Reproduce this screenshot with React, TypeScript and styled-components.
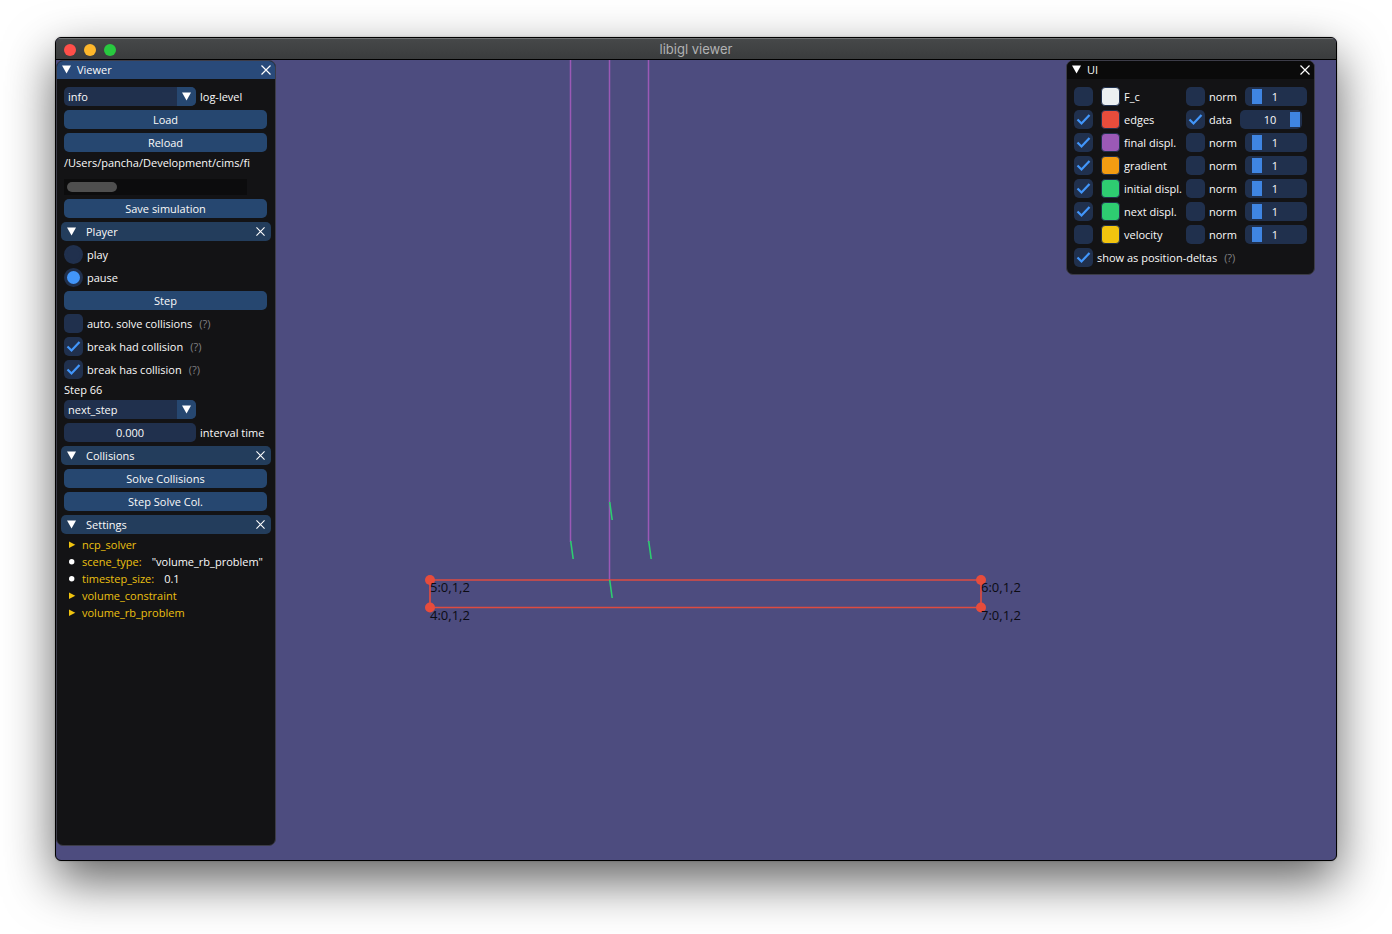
import React, { useState } from "react";
import styled, { createGlobalStyle } from "styled-components";

const color = {
  text: "#fafafa",
  muted: "#808083",
  panel: "#131315",
  border: "#3c3c48",
  frame: "#20304d",
  button: "#264770",
  header: "#233d5c",
  accent: "#4296fa",
  grab: "#3f85e2",
  key: "#ecc011",
  scene: "#4d4c7f",
};

const GlobalStyle = createGlobalStyle`
  *, *::before, *::after { box-sizing: border-box; }
  body { margin: 0; background: #fff; }
  body, button, input, select {
    font-family: "Open Sans", "Noto Sans", sans-serif;
    font-size: 11px;
    line-height: 13px;
    color: ${color.text};
  }
`;

const Desktop = styled.div`
  display: flex;
  min-height: 100vh;
  padding: 37px 55px 73px;
`;

const AppWindow = styled.main`
  flex: 1;
  display: flex;
  flex-direction: column;
  border: 1px solid #000;
  border-radius: 6px;
  overflow: hidden;
  background: ${color.scene};
  box-shadow: 0 20px 50px rgba(0, 0, 0, 0.62), 0 0 2px rgba(0, 0, 0, 0.3);
`;

const TitleBar = styled.header`
  display: grid;
  grid-template-columns: 1fr auto 1fr;
  align-items: center;
  height: 22px;
  padding: 1px 8px 0;
  border-top: 1px solid #707273;
  border-bottom: 1px solid #000;
  background: linear-gradient(#464849, #3a3c3d);
`;

const Lights = styled.div`
  display: flex;
  gap: 8px;
`;

const Light = styled.button<{ $tone: string }>`
  width: 12px;
  height: 12px;
  padding: 0;
  border: 0;
  border-radius: 50%;
  background: ${(p) => p.$tone};
`;

const WindowTitle = styled.h1`
  margin: 0;
  font: 400 13px/17px Inter, sans-serif;
  color: #b1b2b3;
`;

const Scene = styled.div`
  position: relative;
  flex: 1;
  display: flex;
  justify-content: space-between;
  align-items: flex-start;
  padding: 0 21px 14px 0;
`;

const Canvas = styled.svg`
  position: absolute;
  inset: 0;
  width: 100%;
  height: 100%;
`;

const VertexLabel = styled.text`
  font-family: "Open Sans", "Noto Sans", sans-serif;
  font-size: 13px;
  fill: #0b0b12;
`;

const Panel = styled.section<{ $width: number; $fill?: boolean }>`
  position: relative;
  width: ${(p) => p.$width}px;
  align-self: ${(p) => (p.$fill ? "stretch" : "flex-start")};
  border: 1px solid ${color.border};
  border-radius: 7px;
  overflow: hidden;
  background: ${color.panel};
`;

const PanelHead = styled.header<{ $active?: boolean }>`
  display: flex;
  align-items: center;
  height: 18px;
  padding: 0 4px 1px;
  background: ${(p) => (p.$active ? "#294a7a" : "#0a0a0a")};
`;

const HeadTitle = styled.h2`
  flex: 1;
  margin: 0;
  font-size: 11px;
  line-height: 13px;
  font-weight: 400;
`;

const IconButton = styled.button<{ $width: number }>`
  display: flex;
  align-items: center;
  width: ${(p) => p.$width}px;
  padding: 0;
  border: 0;
  background: none;
`;

const PanelBody = styled.div<{ $right: number }>`
  display: flex;
  flex-direction: column;
  gap: 4px;
  padding: 8px ${(p) => p.$right}px 7px 7px;
`;

const SectionHead = styled.header`
  display: flex;
  align-items: center;
  height: 19px;
  margin: 0 -4px 0 -3px;
  padding: 0 5px;
  border-radius: 5px;
  background: ${color.header};
`;

const Row = styled.div`
  display: flex;
  align-items: center;
  gap: 4px;
  height: 19px;
  white-space: nowrap;
`;

const Button = styled.button`
  height: 19px;
  padding: 0;
  border: 0;
  border-radius: 5px;
  background: ${color.button};
`;

const Combo = styled.div`
  display: flex;
  position: relative;
  width: 132px;
  height: 19px;
  border-radius: 5px;
  overflow: hidden;
  background: ${color.frame};
`;

const Select = styled.select`
  flex: 1;
  appearance: none;
  padding: 0 23px 0 4px;
  border: 0;
  background: none;
`;

const ComboArrow = styled.span`
  position: absolute;
  top: 0;
  right: 0;
  display: flex;
  align-items: center;
  justify-content: center;
  width: 19px;
  height: 19px;
  background: ${color.button};
  pointer-events: none;
`;

const NumberBox = styled.input`
  width: 132px;
  height: 19px;
  padding: 0;
  border: 0;
  border-radius: 5px;
  text-align: center;
  background: ${color.frame};
`;

const PathScroller = styled.div`
  display: flex;
  flex-direction: column;
  gap: 10px;
  width: 183px;
  white-space: nowrap;
`;

const ScrollTrack = styled.div`
  height: 16px;
  padding: 3px;
  background: #0c0c0d;
`;

const ScrollThumb = styled.div`
  width: 50px;
  height: 10px;
  border-radius: 5px;
  background: #4f4f4f;
`;

const TickRoot = styled.span`
  position: relative;
  display: flex;
  flex: none;
  width: 19px;
  height: 19px;
  svg {
    position: absolute;
    inset: 0;
    pointer-events: none;
  }
`;

const TickInput = styled.input`
  appearance: none;
  width: 19px;
  height: 19px;
  margin: 0;
  border-radius: 5px;
  background: ${color.frame};
`;

const RadioInput = styled.input`
  appearance: none;
  width: 19px;
  height: 19px;
  margin: 0;
  border: 3px solid ${color.frame};
  border-radius: 50%;
  background: ${color.frame};
  &:checked {
    background: ${color.accent};
  }
`;

const Hint = styled.span`
  margin-left: 3px;
  color: ${color.muted};
`;

const Swatch = styled.button<{ $fill: string }>`
  flex: none;
  width: 19px;
  height: 19px;
  margin-left: 4px;
  padding: 0;
  border: 1px solid ${color.frame};
  border-radius: 4px;
  background: ${(p) => p.$fill};
`;

const LayerName = styled.label`
  flex: none;
  width: 58px;
`;

const ModeName = styled.label<{ $width: number }>`
  flex: none;
  width: ${(p) => p.$width}px;
  margin-right: 4px;
`;

const SliderRoot = styled.span`
  position: relative;
  display: flex;
  flex: none;
  width: 62px;
  height: 19px;
`;

const Range = styled.input`
  appearance: none;
  width: 62px;
  height: 19px;
  margin: 0;
  padding: 2px;
  border-radius: 5px;
  background: ${color.frame};
  &::-webkit-slider-thumb {
    appearance: none;
    width: 10px;
    height: 15px;
    background: ${color.grab};
  }
`;

const SliderValue = styled.output`
  position: absolute;
  inset: 3px 3px 3px 1px;
  text-align: center;
  pointer-events: none;
`;

const Tree = styled.ul`
  display: flex;
  flex-direction: column;
  gap: 4px;
  margin: 0;
  padding: 0 0 0 3px;
  list-style: none;
`;

const TreeItem = styled.li`
  display: flex;
  align-items: center;
  height: 13px;
  white-space: nowrap;
`;

const TreeMark = styled.svg`
  flex: none;
  width: 15px;
  height: 13px;
`;

const Key = styled.span`
  color: ${color.key};
`;

const Value = styled.span`
  margin-left: 10px;
`;

const Down = () => (
  <svg width="11" height="11" viewBox="0 0 11 11">
    <path d="M1 1.5h9L5.5 9.5z" fill="#fff" />
  </svg>
);

const Cross = ({ size }: { size: number }) => (
  <svg width={size} height={size} viewBox="0 0 10 10">
    <path d="M.5.5l9 9M9.5.5l-9 9" stroke="#fff" strokeWidth="1.2" fill="none" />
  </svg>
);

function Tick({ id, on }: { id: string; on?: boolean }) {
  const [checked, setChecked] = useState(!!on);
  return (
    <TickRoot>
      <TickInput
        type="checkbox"
        id={id}
        checked={checked}
        onChange={(e) => setChecked(e.target.checked)}
      />
      {checked && (
        <svg width="19" height="19" viewBox="0 0 19 19">
          <path d="M3.500 9.500l4 4L15.500 5" stroke={color.accent} strokeWidth="2.200" fill="none" />
        </svg>
      )}
    </TickRoot>
  );
}

function TickRow({ id, text, on }: { id: string; text: string; on?: boolean }) {
  return (
    <Row>
      <Tick id={id} on={on} />
      <label htmlFor={id}>{text}</label>
      <Hint>(?)</Hint>
    </Row>
  );
}

function ComboBox({ id, options, label }: { id: string; options: string[]; label?: string }) {
  return (
    <Combo>
      <Select id={id} aria-label={label}>
        {options.map((o) => (
          <option key={o}>{o}</option>
        ))}
      </Select>
      <ComboArrow>
        <Down />
      </ComboArrow>
    </Combo>
  );
}

function Section({ title }: { title: string }) {
  return (
    <SectionHead>
      <IconButton $width={20} aria-label={`Collapse ${title}`}>
        <Down />
      </IconButton>
      <HeadTitle>{title}</HeadTitle>
      <IconButton $width={10} aria-label={`Close ${title}`}>
        <Cross size={9} />
      </IconButton>
    </SectionHead>
  );
}

function PanelTitle({ title, active }: { title: string; active?: boolean }) {
  return (
    <PanelHead $active={active}>
      <IconButton $width={16} aria-label={`Collapse ${title}`}>
        <Down />
      </IconButton>
      <HeadTitle>{title}</HeadTitle>
      <IconButton $width={10} aria-label={`Close ${title}`}>
        <Cross size={10} />
      </IconButton>
    </PanelHead>
  );
}

function Slider({ initial, label }: { initial: number; label: string }) {
  const [value, setValue] = useState(initial);
  return (
    <SliderRoot>
      <Range
        type="range"
        min={0}
        max={10}
        value={value}
        aria-label={label}
        onChange={(e) => setValue(Number(e.target.value))}
      />
      <SliderValue>{value}</SliderValue>
    </SliderRoot>
  );
}

const layers = [
  { name: "F_c", fill: "#ecf0f1" },
  { name: "edges", fill: "#e74c3c", on: true, data: true },
  { name: "final displ.", fill: "#9b59b6", on: true },
  { name: "gradient", fill: "#f39c12", on: true },
  { name: "initial displ.", fill: "#2ecc71", on: true },
  { name: "next displ.", fill: "#2ecc71", on: true },
  { name: "velocity", fill: "#f1c40f" },
];

const settings = [
  { key: "ncp_solver" },
  { key: "scene_type:", value: '"volume_rb_problem"' },
  { key: "timestep_size:", value: "0.1" },
  { key: "volume_constraint" },
  { key: "volume_rb_problem" },
];

const vertices = [
  { x: 374, y: 520, text: "5:0,1,2" },
  { x: 374, y: 547.5, text: "4:0,1,2" },
  { x: 925, y: 520, text: "6:0,1,2" },
  { x: 925, y: 547.5, text: "7:0,1,2" },
];

function Drawing() {
  return (
    <Canvas viewBox="0 0 1280 800" preserveAspectRatio="xMidYMin slice">
      <path d="M514.500 0V482M553.500 0V520M592.500 0V482" stroke="#9b59b6" strokeWidth="1.500" />
      <path d="M374 520H925V547.500H374z" stroke="#de4b41" strokeWidth="1.700" fill="none" />
      <path
        d="M514.700 481l2.500 18M553.700 442l2.500 18M592.700 481l2.500 18M553.700 520l2.500 18"
        stroke="#2ecc71"
        strokeWidth="1.600"
      />
      {vertices.map((v) => (
        <circle key={v.text} cx={v.x} cy={v.y} r="5" fill="#e74c3c" />
      ))}
      {vertices.map((v) => (
        <VertexLabel key={v.text} x={v.x} y={v.y + 12}>
          {v.text}
        </VertexLabel>
      ))}
    </Canvas>
  );
}

export default function App() {
  const [mode, setMode] = useState("pause");
  return (
    <>
      <GlobalStyle />
      <Desktop>
        <AppWindow>
          <TitleBar>
            <Lights>
              <Light $tone="#ff4f49" aria-label="Close" />
              <Light $tone="#fdb72b" aria-label="Minimise" />
              <Light $tone="#28c93f" aria-label="Zoom" />
            </Lights>
            <WindowTitle>libigl viewer</WindowTitle>
          </TitleBar>
          <Scene>
            <Drawing />
            <Panel $width={220} $fill>
              <PanelTitle title="Viewer" active />
              <PanelBody $right={8}>
                <Row>
                  <ComboBox id="log" options={["info", "debug", "warning"]} />
                  <label htmlFor="log">log-level</label>
                </Row>
                <Button>Load</Button>
                <Button>Reload</Button>
                <PathScroller>
                  <span>/Users/pancha/Development/cims/fi</span>
                  <ScrollTrack>
                    <ScrollThumb />
                  </ScrollTrack>
                </PathScroller>
                <Button>Save simulation</Button>
                <Section title="Player" />
                {["play", "pause"].map((m) => (
                  <Row key={m}>
                    <RadioInput
                      type="radio"
                      name="mode"
                      id={m}
                      checked={mode === m}
                      onChange={() => setMode(m)}
                    />
                    <label htmlFor={m}>{m}</label>
                  </Row>
                ))}
                <Button>Step</Button>
                <TickRow id="auto" text="auto. solve collisions" />
                <TickRow id="had" text="break had collision" on />
                <TickRow id="has" text="break has collision" on />
                <span>Step 66</span>
                <Row>
                  <ComboBox id="stage" options={["next_step"]} label="Stage" />
                </Row>
                <Row>
                  <NumberBox id="interval" defaultValue="0.000" />
                  <label htmlFor="interval">interval time</label>
                </Row>
                <Section title="Collisions" />
                <Button>Solve Collisions</Button>
                <Button>Step Solve Col.</Button>
                <Section title="Settings" />
                <Tree>
                  {settings.map((s) => (
                    <TreeItem key={s.key}>
                      <TreeMark viewBox="0 0 15 13">
                        {s.value ? (
                          <circle cx="4.700" cy="6.700" r="2.700" fill="#fff" />
                        ) : (
                          <path d="M2 3.500l6.300 3.200L2 9.900z" fill="#f1c40f" />
                        )}
                      </TreeMark>
                      <Key>{s.key}</Key>
                      {s.value && <Value>{s.value}</Value>}
                    </TreeItem>
                  ))}
                </Tree>
              </PanelBody>
            </Panel>
            <Panel $width={249}>
              <PanelTitle title="UI" />
              <PanelBody $right={7}>
                {layers.map((l) => (
                  <Row key={l.name}>
                    <Tick id={l.name} on={l.on} />
                    <Swatch $fill={l.fill} aria-label={`${l.name} colour`} />
                    <LayerName htmlFor={l.name}>{l.name}</LayerName>
                    <Tick id={`${l.name}-mode`} on={l.data} />
                    <ModeName htmlFor={`${l.name}-mode`} $width={l.data ? 23 : 28}>
                      {l.data ? "data" : "norm"}
                    </ModeName>
                    <Slider initial={l.data ? 10 : 1} label={`${l.name} scale`} />
                  </Row>
                ))}
                <TickRow id="deltas" text="show as position-deltas" on />
              </PanelBody>
            </Panel>
          </Scene>
        </AppWindow>
      </Desktop>
    </>
  );
}
